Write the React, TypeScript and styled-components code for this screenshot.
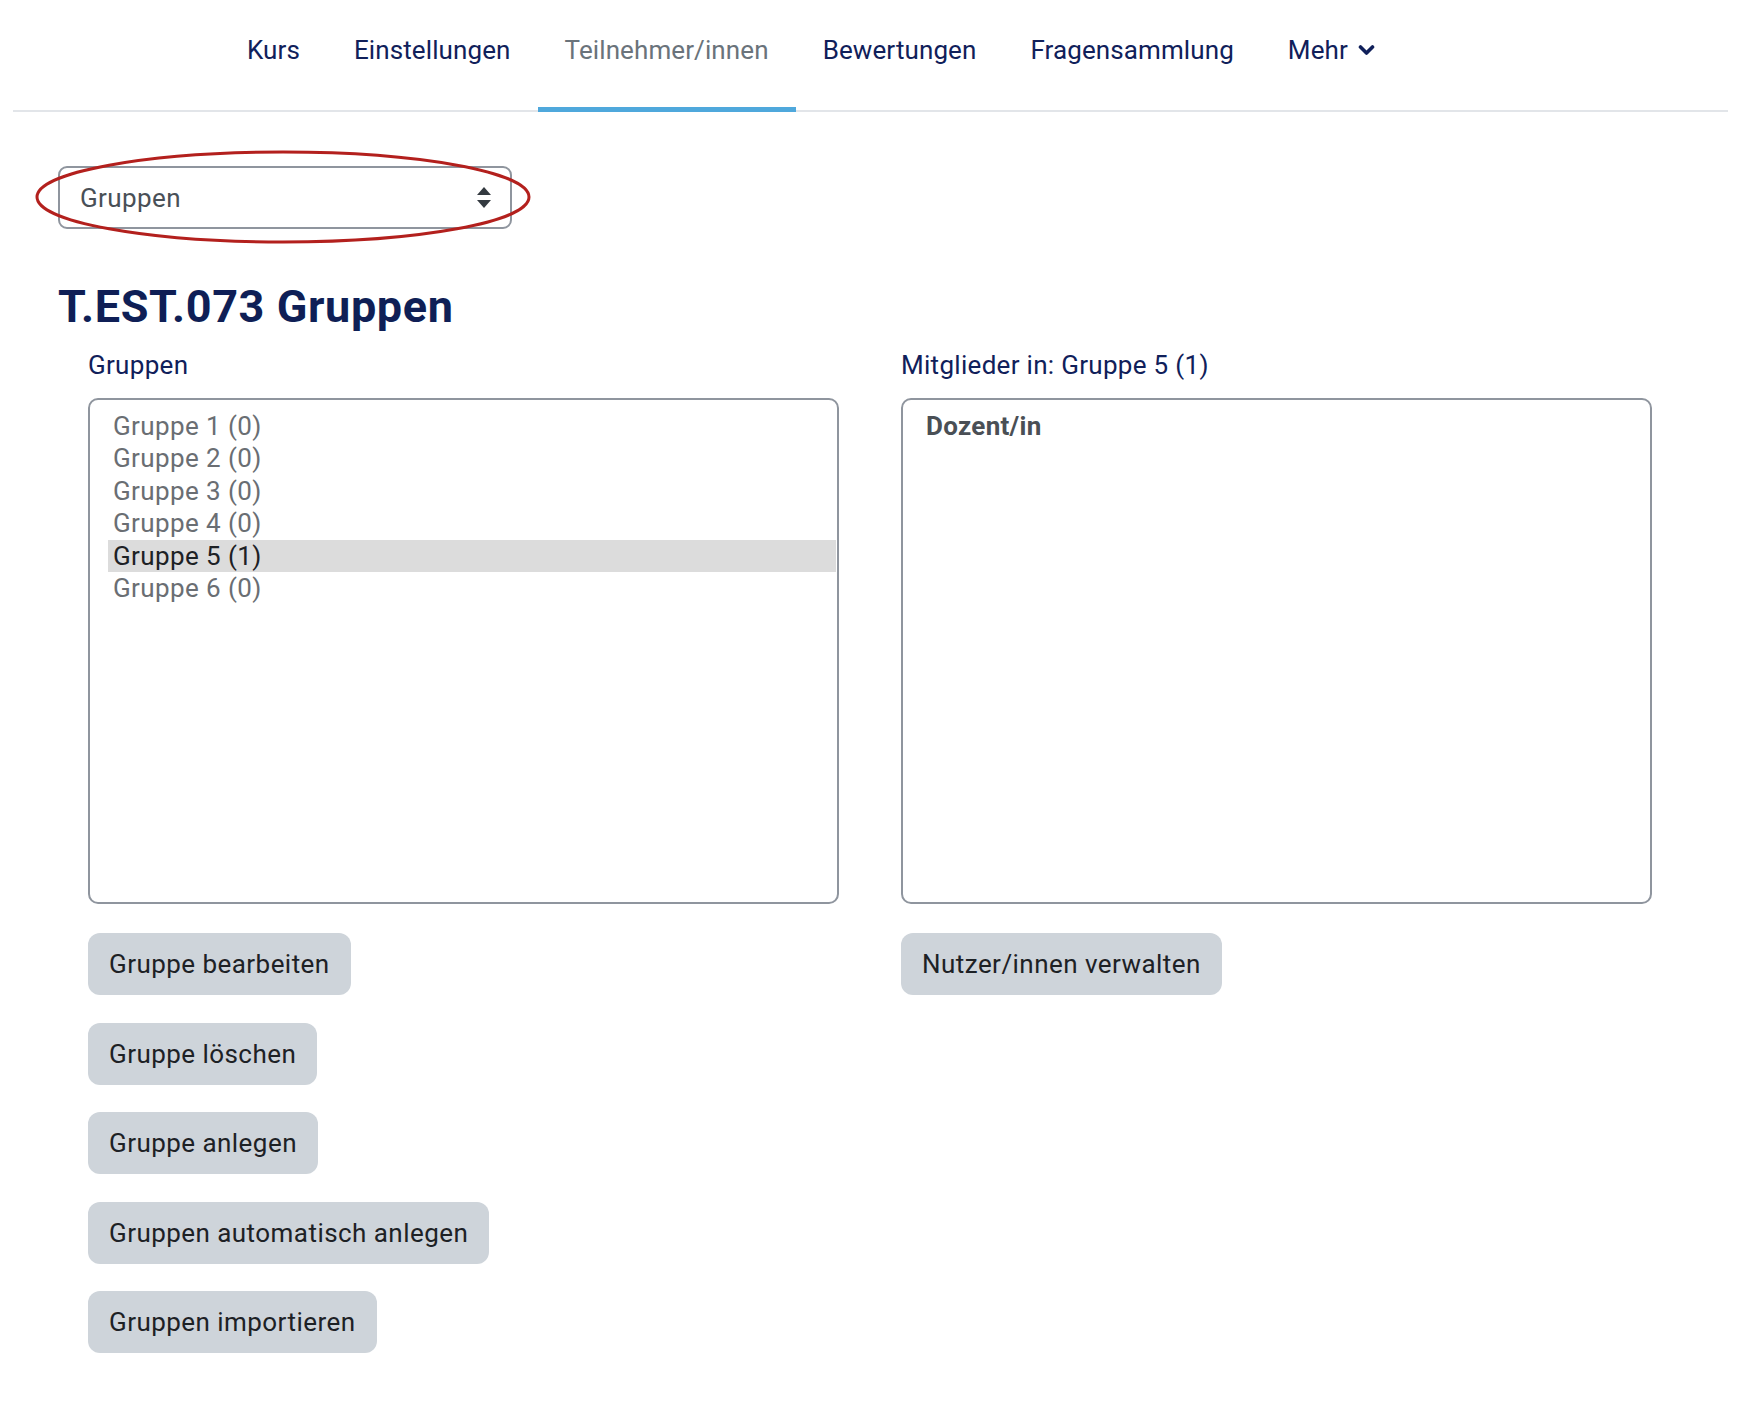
import React, { useState } from 'react';
import styled, { createGlobalStyle } from 'styled-components';

const GlobalStyle = createGlobalStyle`
  body {
    margin: 0;
    background: #ffffff;
    font-family: Roboto, 'Liberation Sans', sans-serif;
    color: #1d2125;
  }
`;

const Page = styled.div`
  width: 1750px;
  min-height: 1408px;
`;

const Header = styled.nav`
  display: flex;
  margin: 0 22px 0 13px;
  padding-left: 207px;
  border-bottom: 2px solid #e2e5e9;
`;

const NavItem = styled.a<{ active?: boolean }>`
  display: flex;
  align-items: flex-start;
  gap: 10px;
  box-sizing: border-box;
  height: 112px;
  margin-bottom: -2px;
  padding: 34px 27px 0;
  line-height: 32px;
  font-size: 26px;
  letter-spacing: 0.1px;
  color: ${(p) => (p.active ? '#6a737b' : '#10205a')};
  border-bottom: 5px solid ${(p) => (p.active ? '#4fa8dc' : 'transparent')};
  cursor: pointer;
`;

const Chevron = styled.svg`
  margin-top: 10px;
`;

const Content = styled.main`
  padding: 54px 0 0 58px;
`;

const SelectWrap = styled.div`
  position: relative;
  width: 454px;
`;

const Select = styled.div`
  display: flex;
  align-items: center;
  justify-content: space-between;
  box-sizing: border-box;
  height: 63px;
  padding: 0 18px 0 20px;
  border: 2px solid #8f959e;
  border-radius: 9px;
  font-size: 26px;
  letter-spacing: 0.4px;
  color: #495057;
`;

const Ellipse = styled.svg`
  position: absolute;
  left: -24px;
  top: -16px;
  pointer-events: none;
`;

const Title = styled.h2`
  margin: 51px 0 0;
  font-size: 45px;
  line-height: 54px;
  font-weight: 700;
  color: #0f1f56;
  letter-spacing: 0.6px;
`;

const Columns = styled.div`
  display: grid;
  grid-template-columns: 751px 751px;
  column-gap: 62px;
  margin: 12px 0 0 30px;
`;

const Column = styled.section`
  display: flex;
  flex-direction: column;
  align-items: flex-start;
`;

const Label = styled.label`
  font-size: 26px;
  line-height: 39px;
  letter-spacing: 0.3px;
  color: #10205a;
`;

const ListBox = styled.div`
  box-sizing: border-box;
  width: 100%;
  height: 506px;
  margin-top: 13px;
  padding: 10px 1px 0 18px;
  border: 2px solid #8f959e;
  border-radius: 10px;
  background: #fff;
`;

const Option = styled.div<{ selected?: boolean }>`
  height: 32.4px;
  padding-left: 5px;
  font-size: 26px;
  line-height: 32px;
  letter-spacing: 0.4px;
  color: ${(p) => (p.selected ? '#1d2125' : '#6a6e73')};
  background: ${(p) => (p.selected ? '#dcdcdc' : 'transparent')};
  cursor: default;
`;

const GroupLabel = styled.div`
  padding-left: 5px;
  font-size: 26px;
  line-height: 32px;
  font-weight: 700;
  letter-spacing: 0.3px;
  color: #4a4f55;
`;

const Buttons = styled.div`
  display: flex;
  flex-direction: column;
  align-items: flex-start;
  gap: 27.5px;
  margin-top: 29px;
`;

const Button = styled.button`
  box-sizing: border-box;
  height: 62px;
  padding: 0 21px;
  border: none;
  border-radius: 12px;
  background: #ced4da;
  font-family: Roboto, 'Liberation Sans', sans-serif;
  font-size: 26px;
  letter-spacing: 0.45px;
  color: #1d2125;
  cursor: pointer;
`;

const navItems = ['Kurs', 'Einstellungen', 'Teilnehmer/innen', 'Bewertungen', 'Fragensammlung'];
const groups = [
  { name: 'Gruppe 1', count: 0 },
  { name: 'Gruppe 2', count: 0 },
  { name: 'Gruppe 3', count: 0 },
  { name: 'Gruppe 4', count: 0 },
  { name: 'Gruppe 5', count: 1 },
  { name: 'Gruppe 6', count: 0 },
];
const groupActions = [
  'Gruppe bearbeiten',
  'Gruppe löschen',
  'Gruppe anlegen',
  'Gruppen automatisch anlegen',
  'Gruppen importieren',
];

const App = () => {
  const [selected, setSelected] = useState(4);
  const current = groups[selected];

  return (
    <Page>
      <GlobalStyle />
      <Header>
        {navItems.map((item) => (
          <NavItem key={item} active={item === 'Teilnehmer/innen'}>
            {item}
          </NavItem>
        ))}
        <NavItem>
          Mehr
          <Chevron width="17" height="12" viewBox="0 0 17 12">
            <path d="M2.5 3 L8.5 9 L14.5 3" fill="none" stroke="#10205a" strokeWidth="3.6" strokeLinecap="round" strokeLinejoin="round" />
          </Chevron>
        </NavItem>
      </Header>

      <Content>
        <SelectWrap>
          <Select>
            Gruppen
            <svg width="16" height="24" viewBox="0 0 16 24">
              <path d="M8 1 L15 9 L1 9 Z" fill="#343a40" />
              <path d="M1 14 L15 14 L8 22 Z" fill="#343a40" />
            </svg>
          </Select>
          <Ellipse width="498" height="96" viewBox="0 0 498 96">
            <ellipse cx="249" cy="47" rx="246" ry="45" fill="none" stroke="#b3201d" strokeWidth="3" />
          </Ellipse>
        </SelectWrap>

        <Title>T.EST.073 Gruppen</Title>

        <Columns>
          <Column>
            <Label>Gruppen</Label>
            <ListBox>
              {groups.map((g, i) => (
                <Option key={g.name} selected={i === selected} onClick={() => setSelected(i)}>
                  {g.name} ({g.count})
                </Option>
              ))}
            </ListBox>
            <Buttons>
              {groupActions.map((a) => (
                <Button key={a}>{a}</Button>
              ))}
            </Buttons>
          </Column>
          <Column>
            <Label>
              Mitglieder in: {current.name} ({current.count})
            </Label>
            <ListBox>
              <GroupLabel>Dozent/in</GroupLabel>
            </ListBox>
            <Buttons>
              <Button>Nutzer/innen verwalten</Button>
            </Buttons>
          </Column>
        </Columns>
      </Content>
    </Page>
  );
};

export default App;
